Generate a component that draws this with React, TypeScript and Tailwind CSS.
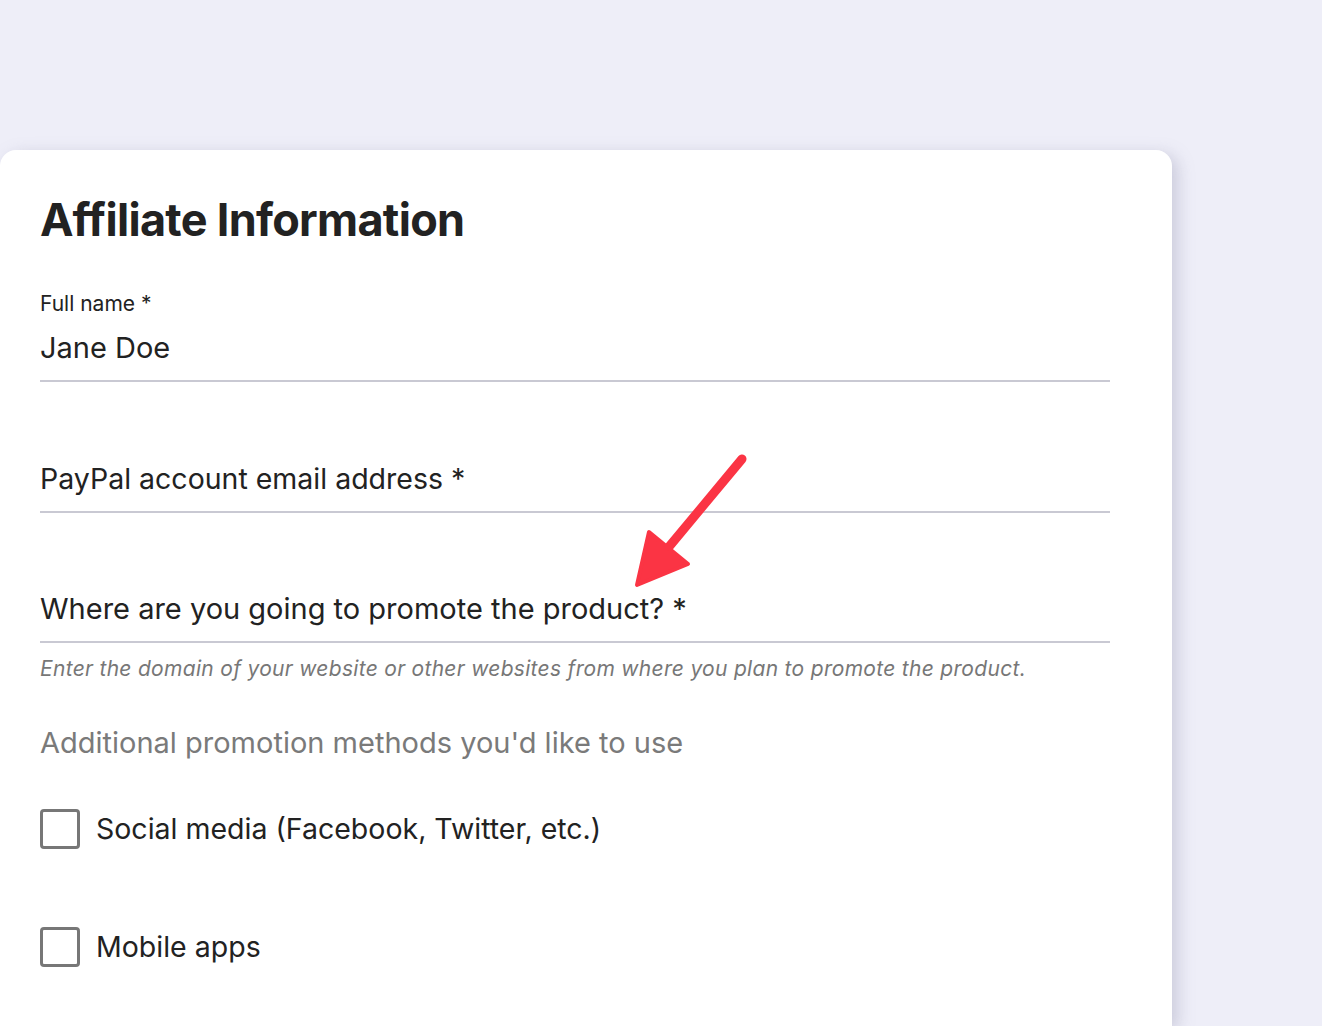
export default function App() {
  return (
    <div className="min-h-screen bg-[#eeeef8] pt-[150px] overflow-hidden" style={{ fontFamily: 'Inter, "Open Sans", sans-serif' }}>
      <div className="relative w-[1172px] min-h-[876px] bg-white rounded-tr-2xl rounded-tl-2xl shadow-[6px_4px_16px_rgba(140,140,170,0.35)] pl-10 pr-[62px] pt-[42px] text-[#222222]">
        <h1 className="text-[45px] leading-[56px] font-bold tracking-[-0.7px]">Affiliate Information</h1>

        <div className="mt-[42px] border-b-2 border-[#c9c9d3] pb-[14px]">
          <div className="text-[21px] leading-[28px]">Full name *</div>
          <div className="mt-[12px] text-[29px] leading-[36px]">Jane Doe</div>
        </div>

        <div className="mt-[79px] border-b-2 border-[#c9c9d3] pb-[14px]">
          <div className="text-[28.5px] leading-[36px]">PayPal account email address *</div>
        </div>

        <div className="mt-[78px] border-b-2 border-[#c9c9d3] pb-[14px]">
          <div className="text-[29px] leading-[36px]">Where are you going to promote the product? *</div>
        </div>
        <div className="mt-[12px] text-[21px] leading-[28px] italic text-[#777777] tracking-[0.3px]">
          Enter the domain of your website or other websites from where you plan to promote the product.
        </div>

        <div className="mt-[42px] text-[29px] leading-[36px] text-[#7a7a7a]">Additional promotion methods you'd like to use</div>

        <div className="mt-[48px] flex items-center gap-4">
          <div className="w-10 h-10 rounded-[4px] border-[3px] border-[#777777]" />
          <span className="text-[28.5px] leading-[36px]">Social media (Facebook, Twitter, etc.)</span>
        </div>
        <div className="mt-[78px] flex items-center gap-4">
          <div className="w-10 h-10 rounded-[4px] border-[3px] border-[#777777]" />
          <span className="text-[28.5px] leading-[36px]">Mobile apps</span>
        </div>

        <svg className="absolute left-[630px] top-[300px]" width="130" height="145" viewBox="630 450 130 145">
          <path d="M742 459 L668 548" stroke="#fb3444" strokeWidth="9" strokeLinecap="round" fill="none" />
          <path d="M649 532 L637 585 L688 564 Z" fill="#fb3444" stroke="#fb3444" strokeWidth="4" strokeLinejoin="round" />
        </svg>
      </div>
    </div>
  );
}
